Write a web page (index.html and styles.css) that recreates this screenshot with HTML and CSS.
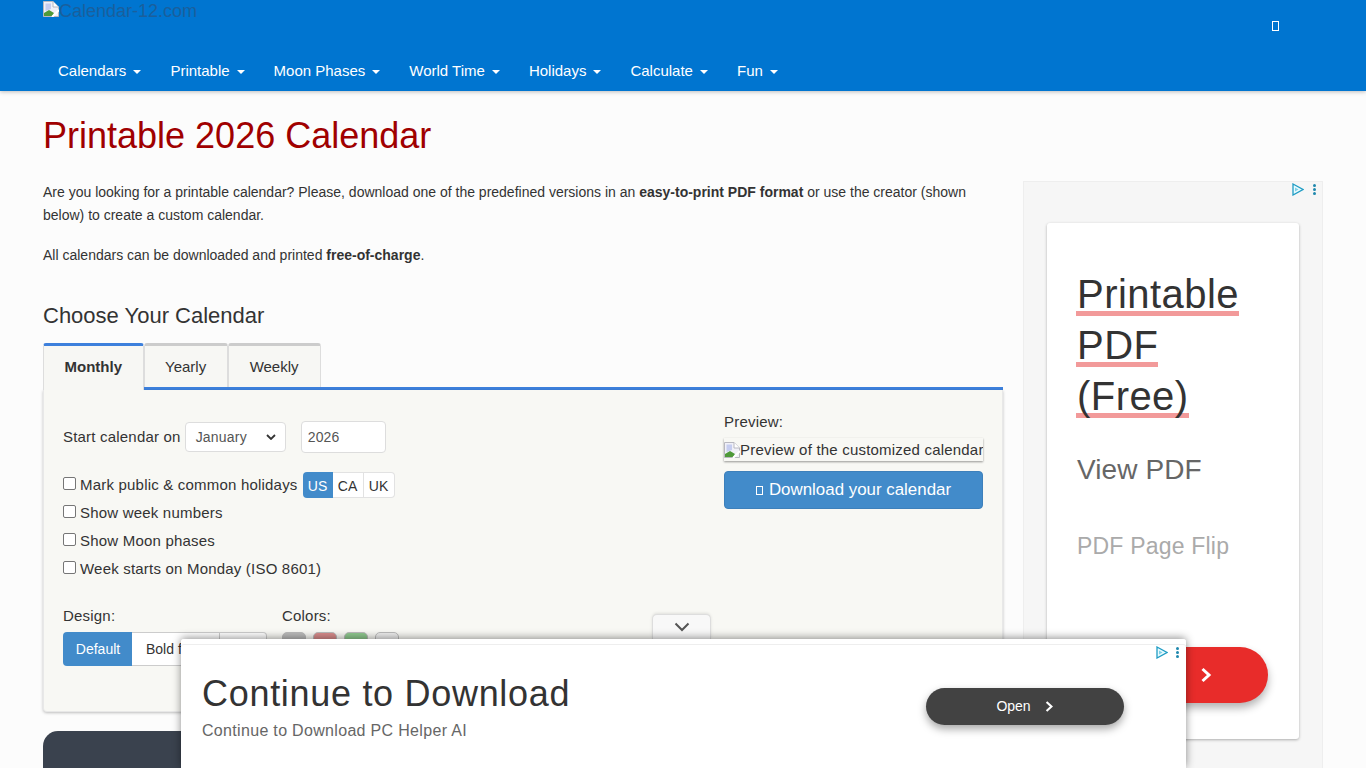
FILE: index.html
```html
<!DOCTYPE html>
<html lang="en">
<head>
<meta charset="utf-8">
<title>Printable 2026 Calendar</title>
<link rel="stylesheet" href="styles.css">
</head>
<body>
<svg class="defs" width="0" height="0" aria-hidden="true">
  <symbol id="broken" viewBox="0 0 16 16">
    <path d="M.5 .5H10L15.5 6V15.5H.5Z" fill="#f1f1f8" stroke="#b8b8c0"/>
    <path d="M10 .5V6H15.5" fill="#fff" stroke="#b8b8c0"/>
    <path d="M1 15V12L6 9L11 12L9 15Z" fill="#4f9a3a"/>
    <path d="M2.5 2.5H8V8L2.5 10Z" fill="#c6cdf0"/>
    <path d="M9 16L16 9" stroke="#fff" stroke-width="2"/>
  </symbol>
  <symbol id="adchoice" viewBox="0 0 12 13">
    <path d="M1 1L11 6.5L1 12Z" fill="#e8fbff" stroke="#1f9cc4" stroke-width="1.3"/>
    <path d="M3 4.5V8.5L6.5 6.5Z" fill="#7fd0e6"/>
  </symbol>
</svg>
<header class="site-header">
  <div class="brand-row">
    <a class="brand"><svg class="broken"><use href="#broken"/></svg>Calendar-12.com</a>
    <span class="tofu tofu-search"></span>
  </div>
  <nav class="main-nav">
    <a>Calendars<i class="caret"></i></a>
    <a>Printable<i class="caret"></i></a>
    <a>Moon Phases<i class="caret"></i></a>
    <a>World Time<i class="caret"></i></a>
    <a>Holidays<i class="caret"></i></a>
    <a>Calculate<i class="caret"></i></a>
    <a>Fun<i class="caret"></i></a>
  </nav>
</header>
<main class="page">
  <h1>Printable 2026 Calendar</h1>
  <div class="columns">
    <div class="content">
      <p class="intro">Are you looking for a printable calendar? Please, download one of the predefined versions in an <b>easy-to-print PDF format</b> or use the creator (shown below) to create a custom calendar.</p>
      <p class="intro">All calendars can be downloaded and printed <b>free-of-charge</b>.</p>
      <h2>Choose Your Calendar</h2>
      <div class="tabs">
        <a class="tab active">Monthly</a>
        <a class="tab">Yearly</a>
        <a class="tab">Weekly</a>
      </div>
      <section class="panel">
        <div class="form-col">
          <div class="start-row">
            <label>Start calendar on</label>
            <span class="select">January<svg class="sel-arrow" viewBox="0 0 10 6"><path d="M1 1L5 5L9 1" fill="none" stroke="#333" stroke-width="1.8"/></svg></span>
            <span class="year">2026</span>
          </div>
          <div class="check first"><span class="box"></span>Mark public &amp; common holidays
            <div class="country"><span class="on">US</span><span>CA</span><span>UK</span></div>
          </div>
          <div class="check"><span class="box"></span>Show week numbers</div>
          <div class="check"><span class="box"></span>Show Moon phases</div>
          <div class="check"><span class="box"></span>Week starts on Monday (ISO 8601)</div>
          <div class="options">
            <div class="design">
              <div class="opt-label">Design:</div>
              <div class="design-btns"><span class="on">Default</span><span class="bold-f">Bold font</span><span class="d3"></span></div>
            </div>
            <div class="colors">
              <div class="opt-label">Colors:</div>
              <div class="swatches"><i class="s1"></i><i class="s2"></i><i class="s3"></i><i class="s4"></i></div>
            </div>
          </div>
        </div>
        <div class="preview-col">
          <div class="prev-label">Preview:</div>
          <div class="prev-img"><svg class="broken"><use href="#broken"/></svg>Preview of the customized calendar</div>
          <a class="download"><span class="tofu tofu-dl"></span>Download your calendar</a>
        </div>
      </section>
      <div class="dark-card"></div>
    </div>
    <aside class="side-ad">
      <div class="ad-marks"><svg class="adc"><use href="#adchoice"/></svg><span class="dots"><i></i><i></i><i></i></span></div>
      <div class="ad-card">
        <div class="ad-title"><span>Printable</span><br><span>PDF</span><br><span>(Free)</span></div>
        <div class="ad-view">View PDF</div>
        <div class="ad-flip">PDF Page Flip</div>
        <a class="ad-cta">Open<svg class="chev" viewBox="0 0 12 16"><path d="M2.5 2L9 8L2.5 14" fill="none" stroke="#fff" stroke-width="3"/></svg></a>
      </div>
    </aside>
  </div>
</main>
<div class="anchor-ad">
  <div class="anchor-tab"><svg viewBox="0 0 16 10"><path d="M1.5 1.5L8 8L14.5 1.5" fill="none" stroke="#555" stroke-width="2"/></svg></div>
  <div class="anchor-body">
    <div class="ad-marks small"><svg class="adc"><use href="#adchoice"/></svg><span class="dots"><i></i><i></i><i></i></span></div>
    <div class="anchor-text">
      <div class="anchor-title">Continue to Download</div>
      <div class="anchor-sub">Continue to Download PC Helper AI</div>
    </div>
    <a class="anchor-btn">Open<svg class="chev small" viewBox="0 0 12 16"><path d="M3 2.5L9 8L3 13.5" fill="none" stroke="#fff" stroke-width="2.6"/></svg></a>
  </div>
</div>
</body>
</html>
```
FILE: styles.css
```css
* { box-sizing: border-box; }
html, body { margin: 0; height: 768px; overflow: hidden; }
body {
  background: #fcfcfc;
  color: #333;
  font: 14px/23px "Liberation Sans", Arial, sans-serif;
  position: relative;
}
.defs { position: absolute; }
.site-header {
  height: 91px;
  background: #0075d0;
  box-shadow: 0 1px 4px rgba(0,0,0,.25);
  display: flex;
  flex-direction: column;
  padding: 0 43px;
}
.brand-row { height: 51px; display: flex; justify-content: space-between; }
.brand {
  color: #1a5f9c;
  font-size: 18px;
  line-height: 20px;
  display: flex;
  align-items: flex-start;
  height: 20px;
  margin-top: 1px;
}
.broken { width: 16px; height: 16px; flex: none; }
.tofu { display: inline-block; border: 1px solid #fff; }
.tofu-search { width: 7px; height: 10px; margin: 21px 44px 0 0; }
.main-nav { display: flex; padding-left: .5px; }
.main-nav a {
  color: #fff;
  font-size: 15px;
  line-height: 40px;
  padding: 0 14.5px;
  display: flex;
  align-items: center;
  white-space: nowrap;
}
.caret {
  width: 0; height: 0;
  margin-left: 7px; margin-top: 2px;
  border: 4px solid transparent;
  border-top-color: #fff;
  border-bottom: 0;
}
.page { padding: 0 43px; }
h1 {
  margin: 25px 0 25px;
  color: #a00000;
  font-size: 36px;
  line-height: 40px;
  font-weight: 400;
}
.columns { display: flex; gap: 20px; align-items: flex-start; }
.content { width: 960px; flex: none; }
.intro { margin: 0 0 17px; }
h2 {
  margin: 36px 0 14px;
  font-size: 22px;
  line-height: 26px;
  font-weight: 400;
}
.tabs {
  display: flex;
  height: 47px;
  border-bottom: 3px solid #3d80dc;
  font-size: 15px;
}
.tab {
  height: 44px;
  padding: 0 20.5px;
  line-height: 41px;
  border: 1px solid #ddd;
  border-top: 3px solid #ccc;
  border-bottom: 0;
  background: #f7f7f4;
  border-radius: 3px 3px 0 0;
}
.tab:last-child { padding: 0 21px; }
.tab.active {
  height: 47px;
  font-weight: 700;
  border-top-color: #3d80dc;
  position: relative;
}
.panel {
  height: 322px;
  background: #f8f8f4;
  border: 1px solid #e8e8e8;
  border-top: 0;
  border-radius: 0 0 4px 4px;
  box-shadow: 0 1px 3px rgba(0,0,0,.25);
  display: flex;
  justify-content: space-between;
  padding: 0 19px;
  font-size: 15px;
  letter-spacing: .2px;
}
.start-row { display: flex; align-items: flex-start; margin-top: 30px; height: 33px; }
.start-row label { line-height: 34px; }
.select {
  width: 101px; height: 30px;
  margin: 2px 0 0 4px;
  background: #fff;
  border: 1px solid #ddd;
  border-radius: 4px;
  font-size: 14px;
  line-height: 28px;
  padding-left: 10px;
  color: #555;
  display: flex;
  justify-content: space-between;
  align-items: center;
  padding-right: 9px;
}
.sel-arrow { width: 10px; height: 6px; }
.year {
  width: 85px; height: 32px;
  margin: 1px 0 0 15px;
  background: #fff;
  border: 1px solid #ddd;
  border-radius: 4px;
  font-size: 14px;
  line-height: 30px;
  padding-left: 6px;
  color: #555;
}
.check { display: flex; align-items: center; height: 28px; white-space: nowrap; }
.check.first { margin-top: 17px; }
.box {
  width: 13px; height: 13px;
  margin-right: 4px;
  border: 1px solid #767676;
  border-radius: 2px;
  background: #fff;
  margin-top: -2px;
}
.country { display: flex; margin-left: 5px; height: 26px; margin-top: 2px; font-size: 14px; }
.country span {
  width: 31px;
  text-align: center;
  line-height: 26px;
  background: #fff;
  border: 1px solid #e2e2e2;
  border-left: 0;
}
.country span:last-child { border-radius: 0 4px 4px 0; }
.country .on { width: 30px; background: #428bca; color: #fff; border: 0; border-radius: 4px 0 0 4px; line-height: 28px; }
.options { display: flex; margin-top: 23px; }
.design { width: 219px; }
.opt-label { line-height: 22px; }
.design-btns { display: flex; height: 34px; margin-top: 5px; font-size: 14px; letter-spacing: 0; }
.design-btns span {
  background: #fff;
  line-height: 32px;
  border: 1px solid #ccc;
  border-left: 0;
  white-space: nowrap;
}
.design-btns .on {
  width: 69px; background: #428bca; color: #fff; text-align: center;
  padding-left: 1px;
  border: 0; border-radius: 4px 0 0 4px; line-height: 34px;
}
.design-btns .bold-f { width: 88px; padding-left: 14px; }
.design-btns .d3 { width: 47px; border-radius: 0 4px 4px 0; }
.swatches { display: flex; gap: 7px; margin-top: 5px; }
.swatches i { width: 24px; height: 34px; border: 1px solid #bbb; border-radius: 5px; }
.s1 { background: #bcbcbc; }
.s2 { background: #d98c8c; }
.s3 { background: #8fc98f; }
.s4 { background: #eee; }
.preview-col { width: 259px; padding-top: 22px; }
.prev-label { line-height: 20px; }
.prev-img {
  height: 23px;
  margin-top: 6px;
  display: flex;
  align-items: center;
  white-space: nowrap;
  overflow: hidden;
  box-shadow: 0 1px 2px rgba(0,0,0,.4);
}
.download {
  display: flex; justify-content: center; align-items: center;
  height: 38px;
  margin-top: 10px;
  padding-bottom: 2px;
  background: #428bca;
  color: #fff;
  font-size: 16.9px;
  letter-spacing: 0;
  border-radius: 4px;
  border: 1px solid #3d80bb;
}
.tofu-dl { width: 7px; height: 9px; margin: 2px 6px 0 0; }
.dark-card { height: 60px; margin-top: 19px; background: #3a424e; border-radius: 15px 15px 0 0; }
.side-ad {
  width: 300px; height: 600px;
  background: #f6f6f6;
  border: 1px solid #eee;
  position: relative;
  padding: 41px 23px 0;
}
.ad-marks { position: absolute; top: 1px; right: 6px; display: flex; align-items: center; gap: 9px; }
.adc { width: 12px; height: 13px; }
.dots { display: flex; flex-direction: column; gap: 1px; }
.dots i { width: 3px; height: 3px; border-radius: 50%; background: #1f88ad; }
.ad-card {
  height: 516px;
  background: #fff;
  border-radius: 3px;
  box-shadow: 0 1px 3px rgba(0,0,0,.3);
  padding: 46px 30px 0 29px;
  position: relative;
}
.ad-title { font-size: 40px; line-height: 51px; letter-spacing: .45px; color: #333; text-indent: 0; }
.ad-title span { box-shadow: inset 0 -5px 0 #f29a9a; padding-left: 1px; }
.ad-view { font-size: 28px; line-height: 34px; margin: 31px 0 0 1px; color: #666; letter-spacing: .1px; }
.ad-flip { font-size: 23px; line-height: 30px; margin: 44px 0 0 1px; color: #aaa; letter-spacing: .2px; }
.ad-cta {
  position: absolute;
  top: 424px; left: 29px;
  width: 192px; height: 56px;
  border-radius: 28px;
  background: #e82c2a;
  color: #fff;
  font-size: 20px;
  display: flex; align-items: center; justify-content: center; gap: 14px;
  padding-left: 6px;
  box-shadow: 0 5px 8px rgba(0,0,0,.3);
}
.chev { width: 12px; height: 16px; }
.chev.small { width: 10px; height: 13px; }
.anchor-ad { position: absolute; left: 181px; top: 639px; width: 1005px; height: 129px; }
.anchor-tab {
  position: absolute;
  top: -25px; left: 471px;
  width: 59px; height: 25px;
  background: #f8f8f8;
  border: 1px solid #ddd;
  border-bottom: 0;
  border-radius: 5px 5px 0 0;
  display: flex; align-items: center; justify-content: center;
  box-shadow: 0 -1px 3px rgba(0,0,0,.1);
}
.anchor-tab svg { width: 16px; height: 10px; }
.anchor-body {
  height: 129px;
  background: #fff;
  box-shadow: inset 0 5px 0 #fff, inset 0 6px 0 #eee, 0 -1px 8px rgba(0,0,0,.45);
  border-radius: 3px 3px 0 0;
  position: relative;
  display: flex;
  align-items: flex-start;
  justify-content: space-between;
  padding: 33px 62px 0 21px;
}
.ad-marks.small { top: 7px; right: 7px; gap: 8px; }
.anchor-title { font-size: 36px; line-height: 44px; letter-spacing: .7px; color: #333; }
.anchor-sub { font-size: 16px; line-height: 24px; margin-top: 3px; color: #666; letter-spacing: .32px; }
.anchor-btn {
  width: 198px; height: 37px;
  margin-top: 16px;
  border-radius: 19px;
  background: #424242;
  color: #fff;
  font-size: 14px;
  display: flex; align-items: center; justify-content: center; gap: 13px;
  box-shadow: 0 4px 8px rgba(0,0,0,.35);
}
```
